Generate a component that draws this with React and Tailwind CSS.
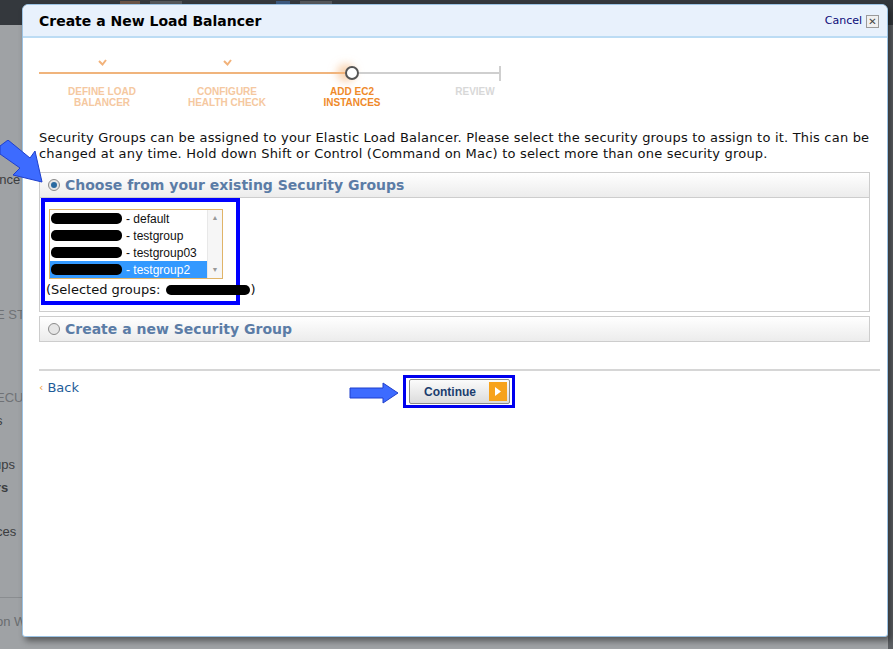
import { useState } from "react"

const groups = [
    { id: "sg-0a1b2c3d", name: "default" },
    { id: "sg-4e5f6a7b", name: "testgroup" },
    { id: "sg-8c9d0e1f", name: "testgroup03" },
    { id: "sg-2a3b4c5d", name: "testgroup2" },
]

function BlueArrow({ className }) {
    return (
        <svg className={className} viewBox="0 0 50 22" width="50" height="22">
            <polygon points="1,6 34,6 34,1 49,11 34,21 34,16 1,16"
                fill="#3d6bff" stroke="#1f3fcc" strokeWidth="1" />
        </svg>
    )
}

function StepCheck() {
    return (
        <svg width="9" height="7" viewBox="0 0 9 7">
            <path d="M1 2 L4.5 5.5 L8 1" stroke="#f2b27a" strokeWidth="2" fill="none" />
        </svg>
    )
}

export default function App() {
    const [selected, setSelected] = useState(3)
    const [mode, setMode] = useState("existing")

    return <div className="relative w-[893px] h-[649px] overflow-hidden bg-[#9fa2a5]"
        style={{ fontFamily: "'DejaVu Sans', Verdana, sans-serif" }}>
        {/* dimmed console behind the dialog */}
        <div className="h-[25px] bg-[#34383d] flex items-start gap-[10px] px-2 pt-[1px]">
            <span className="ml-[112px] w-[20px] h-[6px] bg-[#6b5548]"></span>
            <span className="w-[32px] h-[5px] bg-[#55585c]"></span>
            <span className="ml-[84px] w-[14px] h-[6px] bg-[#3d5a80]"></span>
            <span className="w-[32px] h-[5px] bg-[#55585c]"></span>
        </div>
        <div className="flex flex-col text-[13px] text-[#3b3d40]" style={{ fontFamily: "'Liberation Sans', Arial, sans-serif" }}>
            <span className="mt-[145px] -ml-[8px]">ance</span>
            <span className="mt-[115px] -ml-[4px] text-[#6f7276]">E ST</span>
            <span className="mt-[64px] -ml-[4px] text-[#6f7276]">ECUF</span>
            <span className="mt-[3px] -ml-[4px]">s</span>
            <span className="mt-[25px] -ml-[6px]">ups</span>
            <span className="mt-[3px] -ml-[4px] font-bold">rs</span>
            <span className="mt-[25px] -ml-[4px]">ces</span>
            <div className="mt-[55px] w-[22px] border-t border-[#8a8d90]"></div>
            <span className="mt-[14px] -ml-[4px] text-[#6a6d70]">on W</span>
        </div>
        <div className="absolute right-0 top-[25px] w-[5px] h-full bg-[#5d6064]"></div>

        {/* dialog */}
        <div className="absolute left-[22px] top-[4px] w-[866px] h-[633px] bg-white rounded-t-[6px] rounded-b-[3px] border border-[#9cc3e4] shadow-[3px_4px_6px_rgba(0,0,0,0.45)] flex flex-col">
            <div className="h-[33px] shrink-0 bg-[#e8f1fc] border-b-2 border-[#bcdcf4] rounded-t-[6px] flex items-center justify-between pl-[16px] pr-[8px]">
                <h1 className="text-[14px] font-bold text-black mt-[2px]">Create a New Load Balancer</h1>
                <div className="flex items-center gap-[4px] mt-[2px]">
                    <span className="text-[11px] text-[#0b0b78]">Cancel</span>
                    <span className="w-[13px] h-[13px] border border-[#9a9a9a] bg-[#f0f0f0] text-[10px] leading-[11px] text-center text-[#444] font-bold">✕</span>
                </div>
            </div>

            <div className="pl-[16px] pr-[17px] flex flex-col">
                {/* wizard */}
                <div className="mt-[24px]" style={{ fontFamily: "'Liberation Sans', Arial, sans-serif" }}>
                    <div className="relative w-[462px] h-[22px] flex items-center">
                        <div className="w-[306px] h-[2px] bg-[#f0b47c]"></div>
                        <div className="w-[14px] h-[14px] rounded-full border-2 border-[#555] bg-white shadow-[-6px_0_8px_2px_rgba(245,180,120,0.6)]"></div>
                        <div className="flex-1 h-[2px] bg-[#cfcfcf]"></div>
                        <div className="w-[2px] h-[15px] bg-[#cfcfcf]"></div>
                        <div className="absolute left-[59px] top-[-3px]"><StepCheck /></div>
                        <div className="absolute left-[184px] top-[-3px]"><StepCheck /></div>
                    </div>
                    <div className="flex text-[10px] font-bold leading-[11px] mt-[2px] text-center">
                        <div className="w-[126px] shrink-0 text-[#f5c8a0]">DEFINE LOAD<br />BALANCER</div>
                        <div className="w-[124px] shrink-0 text-[#f5c8a0]">CONFIGURE<br />HEALTH CHECK</div>
                        <div className="w-[126px] shrink-0 text-[#ef8a2a]">ADD EC2<br />INSTANCES</div>
                        <div className="w-[120px] shrink-0 text-[#d8d8d8]">REVIEW</div>
                    </div>
                </div>

                <p className="mt-[22px] text-[13px] leading-[16px] text-[#111] tracking-[0.2px]">
                    Security Groups can be assigned to your Elastic Load Balancer. Please select the security groups to assign to it. This can be changed at any time. Hold down Shift or Control (Command on Mac) to select more than one security group.
                </p>

                {/* existing groups */}
                <div className="mt-[10px] border border-[#cdcdcd]">
                    <label className="h-[25px] flex items-center gap-[5px] pl-[8px] bg-gradient-to-b from-white to-[#ececec] border-b border-[#cdcdcd] cursor-pointer"
                        onClick={() => setMode("existing")}>
                        <span className="w-[12px] h-[12px] rounded-full border border-[#8a8a8a] bg-[#e6e6e6] flex items-center justify-center">
                            {mode === "existing" && <span className="w-[6px] h-[6px] rounded-full bg-[#2a6aa0]"></span>}
                        </span>
                        <span className="text-[14px] font-bold text-[#5b7ca6]">Choose from your existing Security Groups</span>
                    </label>
                    <div className="h-[113px] pl-[1px]">
                        <div className="w-[199px] h-[107px] border-4 border-[#0000ff] pt-[7px] pl-[4px]">
                            <div className="w-[174px] h-[70px] border border-[#e0b468] flex bg-white text-[12px] whitespace-nowrap"
                                style={{ fontFamily: "'Liberation Sans', Arial, sans-serif" }}>
                                <div className="flex-1 flex flex-col overflow-hidden">
                                    {groups.map((g, i) => (
                                        <div key={g.id} onClick={() => setSelected(i)}
                                            className={`h-[17px] shrink-0 flex items-center gap-[4px] pl-[1px] ${selected === i ? "bg-[#3399ff] text-white" : "text-[#111]"}`}>
                                            <span className="w-[71px] h-[11px] shrink-0 rounded-[5px] bg-black"></span>
                                            <span>- {g.name}</span>
                                        </div>
                                    ))}
                                </div>
                                <div className="w-[15px] shrink-0 bg-[#f6f6f6] border-l border-[#e8e8e8] flex flex-col justify-between items-center py-[3px] text-[7px] text-[#999]">
                                    <span>▲</span>
                                    <span>▼</span>
                                </div>
                            </div>
                            <div className="mt-[1px] -ml-[3px] text-[13px] text-[#111] flex items-center whitespace-nowrap">
                                (Selected groups:
                                <span className="w-[84px] h-[10px] shrink-0 rounded-[5px] bg-black ml-[6px]"></span>)
                            </div>
                        </div>
                    </div>
                </div>

                {/* new group */}
                <label className="mt-[4px] h-[26px] border border-[#cdcdcd] flex items-center gap-[5px] pl-[8px] bg-gradient-to-b from-white to-[#ececec] cursor-pointer"
                    onClick={() => setMode("new")}>
                    <span className="w-[12px] h-[12px] rounded-full border border-[#8a8a8a] bg-[#e6e6e6] flex items-center justify-center">
                        {mode === "new" && <span className="w-[6px] h-[6px] rounded-full bg-[#2a6aa0]"></span>}
                    </span>
                    <span className="text-[14px] font-bold text-[#5b7ca6]">Create a new Security Group</span>
                </label>

                <div className="mt-[27px] border-t-2 border-[#d6d6d6] mr-[-10px]"></div>

                <div className="flex items-start mt-[4px]">
                    <div className="mt-[3px] flex items-center gap-[4px] text-[13px]">
                        <span className="text-[#f0a040] text-[11px]">‹</span>
                        <span className="text-[#1f5d99]">Back</span>
                    </div>
                    <div className="ml-[270px] flex items-center gap-[4px]">
                        <BlueArrow className="mt-[2px]" />
                        <div className="border-[3px] border-[#0000ee] pl-[3px] pr-[2px] py-[1px]">
                            <button className="w-[101px] h-[25px] rounded-[2px] border border-[#8c8c8c] bg-gradient-to-b from-[#fbfbfb] to-[#dcdcdc] flex items-center justify-between pl-[14px] pr-[2px]">
                                <span className="text-[12px] font-bold text-[#1b3d6e]" style={{ fontFamily: "'Liberation Sans', Arial, sans-serif" }}>Continue</span>
                                <span className="w-[18px] h-[19px] bg-[#f7a21b] flex items-center justify-center">
                                    <svg width="8" height="11" viewBox="0 0 8 11"><polygon points="1,1 7,5.5 1,10" fill="white" /></svg>
                                </span>
                            </button>
                        </div>
                    </div>
                </div>
            </div>
        </div>

        {/* annotation arrow at left */}
        <svg className="absolute left-0 top-[140px]" width="48" height="48" viewBox="0 0 48 48">
            <polygon points="0,6 8,0 30,18 35,11 42,42 13,35 20,28 0,14" fill="#3d6bff" stroke="#1f3fcc" strokeWidth="1" />
        </svg>
    </div>
}
